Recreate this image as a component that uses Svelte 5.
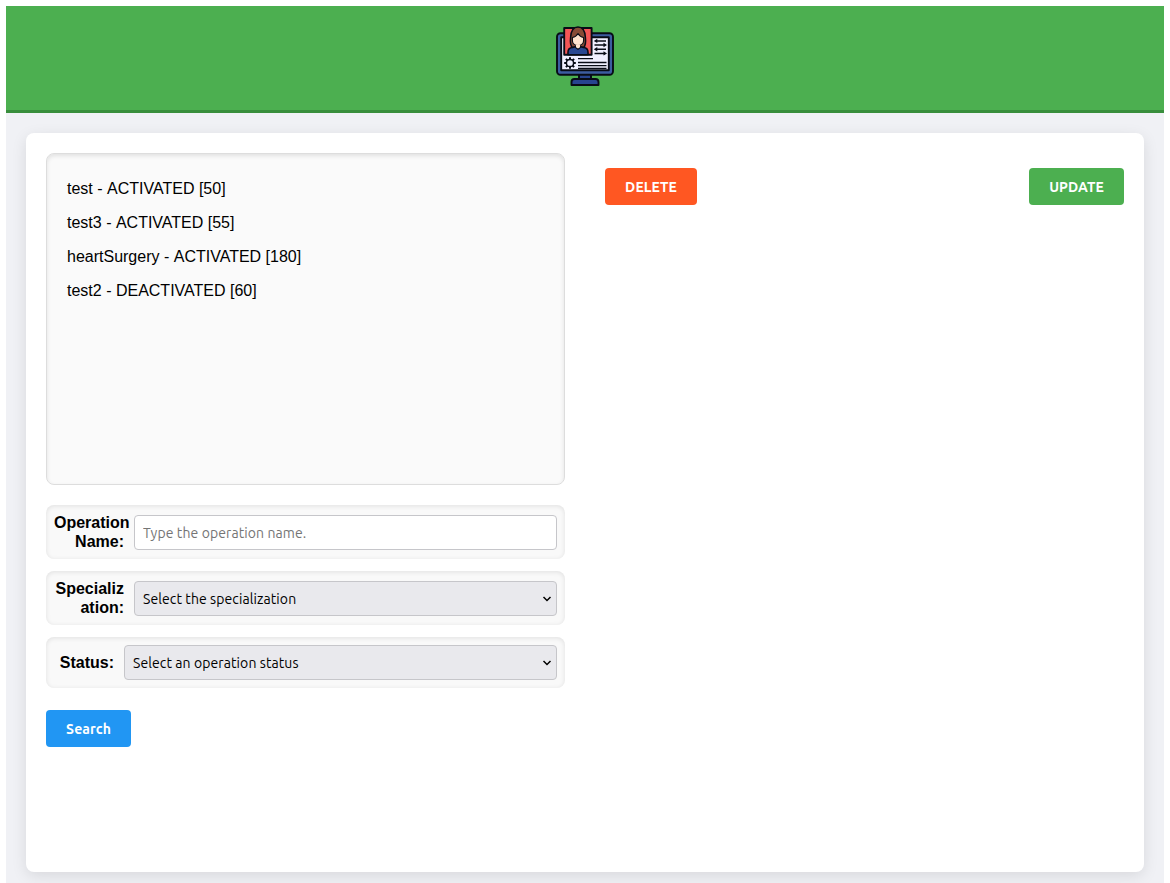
<script>
  const operations = [
    { name: 'test', status: 'ACTIVATED', minutes: 50 },
    { name: 'test3', status: 'ACTIVATED', minutes: 55 },
    { name: 'heartSurgery', status: 'ACTIVATED', minutes: 180 },
    { name: 'test2', status: 'DEACTIVATED', minutes: 60 }
  ];
</script>

<div class="page">
  <header>
    <svg width="60" height="60" viewBox="0 0 60 60" aria-hidden="true">
      <g stroke="#080c16" stroke-width="1.900" stroke-linejoin="round" stroke-linecap="round">
        <path fill="#27448f" d="M24 48h12v5H24z" />
        <rect x="2" y="7.200" width="56" height="41.600" rx="3.500" fill="#3c5da0" />
        <path fill="#27448f" d="M19.500 53h21q3 0 3 3v3h-27v-3q0-3 3-3z" />
        <rect x="6.200" y="11.300" width="47.600" height="33" fill="#f0f0ff" />
        <rect x="9.200" y="2" width="27.400" height="26.800" fill="#f45656" />
        <path fill="#874b36" stroke-width="1.500" d="M17.500 21.500c-2.500-2-2.500-5-1.900-10C16 4 19 1 23 1s7 3 7.400 10.500c.6 5 .6 8-1.900 10z" />
        <path fill="#294891" stroke-width="1.600" d="M13 28.800v-2.500q0-4.500 4.500-4.800l2.500-.8 3 2.300 3-2.300 2.500.8q4.500.3 4.500 4.800v2.500z" />
        <path fill="#ffe3ce" stroke-width="1.100" d="M17.400 11.500c2.600-.5 4.500-1.800 5.600-4 1.100 2.200 3 3.500 5.600 4v3c0 3-2.600 5-5.600 5s-5.600-2-5.600-5z" />
      </g>
      <path d="M21 18.800h4v2.400l-2 1.200-2-1.200z" fill="#ffe3ce" />
      <g fill="none" stroke="#080c16" stroke-width="1.500">
        <path d="M41 14.900h10M39.500 19H50M41 23.200h10M39.500 27.400H50" />
        <path d="M23 32.700h15M23 36.500h28.500M23 39.600h28.500M23 42.300h28.500" stroke-width="1.300" />
        <circle cx="15" cy="37" r="3.600" />
        <path d="M15 31.200v2.300M15 40.500v2.300M9.200 37h2.300M18.500 37h2.300M10.900 32.900l1.600 1.600M17.500 39.500l1.600 1.600M10.900 41.100l1.600-1.600M17.500 34.500l1.600-1.600" stroke-width="2" />
      </g>
      <path fill="#080c16" d="M38.800 14.900l3.500-2.200v4.400zM52 19l-3.500-2.200v4.400zM38.800 23.200l3.500-2.200v4.400zM52 27.400l-3.500-2.200v4.400z" />
    </svg>
  </header>

  <main>
    <section class="left">
      <ul>
        {#each operations as op}
          <li>{op.name} - <span>{op.status}</span> [{op.minutes}]</li>
        {/each}
      </ul>

      <form onsubmit={(e) => e.preventDefault()}>
        <div class="field">
          <label for="name">Operation<br />Name:</label>
          <input id="name" type="text" placeholder="Type the operation name." />
        </div>
        <div class="field">
          <label for="spec">Specializ<br />ation:</label>
          <select id="spec"><option>Select the specialization</option></select>
        </div>
        <div class="field short">
          <label for="status">Status:</label>
          <select id="status"><option>Select an operation status</option></select>
        </div>
        <button class="search">Search</button>
      </form>
    </section>

    <section class="actions">
      <button class="delete">DELETE</button>
      <button class="update">UPDATE</button>
    </section>
  </main>
</div>

<style>
  :global(body) {
    background: #fff;
    overflow: hidden;
  }
  .page {
    box-sizing: border-box;
    height: 877px;
    margin: 6px 6px 0;
    background: #f0f1f5;
    font: 16px/19px 'Liberation Sans', Arial, sans-serif;
    color: #000;
    overflow: hidden;
  }
  header {
    box-sizing: border-box;
    height: 107px;
    padding-top: 20px;
    display: flex;
    justify-content: center;
    background: #4caf50;
    border-bottom: 3px solid #388e3c;
  }
  main {
    box-sizing: border-box;
    height: 739px;
    margin: 20px;
    padding: 20px;
    display: grid;
    grid-template-columns: 519px 519px;
    gap: 40px;
    background: #fff;
    border-radius: 8px;
    box-shadow: 0 4px 15px rgba(0, 0, 0, 0.1);
  }
  ul {
    box-sizing: border-box;
    height: 332px;
    margin: 0 0 20px;
    padding: 18px 20px 16px;
    list-style: none;
    background: #fafafa;
    border: 1px solid #ddd;
    border-radius: 8px;
    box-shadow: inset 0 2px 4px rgba(0, 0, 0, 0.1);
  }
  li {
    height: 34px;
    line-height: 34px;
  }
  li span {
    display: inline-block;
  }
  .field {
    box-sizing: border-box;
    height: 54px;
    margin-bottom: 12px;
    padding: 0 8px;
    display: flex;
    align-items: center;
    background: #f9f9f9;
    border-radius: 8px;
    box-shadow: inset 0 1px 5px rgba(0, 0, 0, 0.1);
  }
  .short {
    height: 51px;
    margin-bottom: 22px;
  }
  label {
    width: 70px;
    margin-right: 10px;
    flex: none;
    text-align: right;
    font-weight: bold;
  }
  .short label {
    width: 60px;
  }
  input,
  select,
  button {
    box-sizing: border-box;
    font-family: Ubuntu, 'Noto Sans', sans-serif;
    font-size: 14px;
    color: #000;
  }
  input,
  select {
    flex: 1;
    min-width: 0;
    height: 35px;
    padding: 8px;
    border: 1px solid #c6c6ca;
    border-radius: 4px;
    background: #fff;
    letter-spacing: 0.09px;
  }
  input {
    padding: 9px 8px 7px;
  }
  select {
    appearance: none;
    background: #e9e9ed
      url("data:image/svg+xml,%3Csvg xmlns='http://www.w3.org/2000/svg' width='10' height='6'%3E%3Cpath d='M1.500 1L5 4.500 8.500 1' fill='none' stroke='black' stroke-width='1.500'/%3E%3C/svg%3E")
      no-repeat right 4px top 14px;
  }
  #spec {
    padding: 9px 8px 7px;
  }
  .actions {
    display: flex;
    justify-content: space-between;
    align-items: flex-start;
    padding-top: 15px;
  }
  button {
    height: 37px;
    padding: 0;
    border: 0;
    border-radius: 4px;
    color: #fff;
    font-weight: bold;
    letter-spacing: 0.08px;
  }
  .search {
    width: 85px;
    background: #2196f3;
  }
  .delete {
    width: 92px;
    background: #ff5722;
  }
  .update {
    width: 95px;
    background: #4caf50;
  }
</style>
